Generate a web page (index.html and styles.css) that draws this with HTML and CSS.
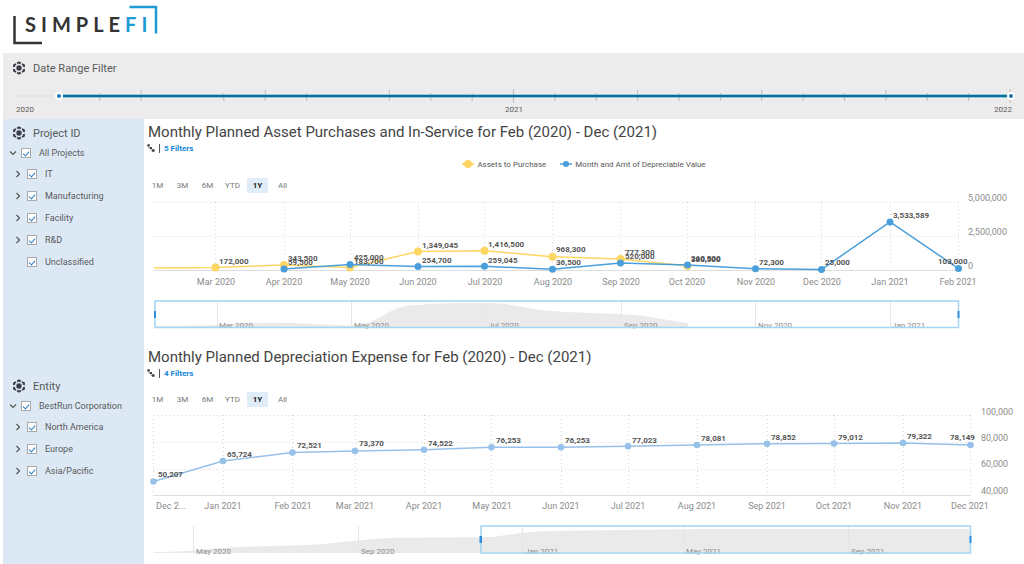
FILE: index.html
```html
<!DOCTYPE html>
<html lang="en">
<head>
<meta charset="utf-8">
<meta name="viewport" content="width=device-width, initial-scale=1">
<title>SimpleFi – Asset Planning</title>
<link rel="stylesheet" href="styles.css">
</head>
<body>
<svg class="defs" aria-hidden="true">
  <symbol id="hex" viewBox="0 0 14 14">
    <circle cx="7" cy="7" r="2.7"/>
    <path d="M4.6 1.800 7 .3 9.400 1.800 8.300 3.200 7 2.500 5.700 3.200ZM10.200 2.200 12.900 3.600V6.200L10.800 5.800V4.600L9.600 3.800ZM10.800 8.200 12.900 7.800V10.400L10.200 11.800 9.600 10.200 10.800 9.400ZM4.600 12.200 7 13.700 9.400 12.200 8.300 10.800 7 11.500 5.700 10.800ZM3.800 2.200 1.100 3.600V6.200L3.200 5.800V4.600L4.400 3.800ZM3.200 8.200 1.100 7.800V10.400L3.800 11.800 4.400 10.200 3.200 9.400Z"/>
  </symbol>
  <symbol id="right" viewBox="0 0 8 8"><path d="M2.5 1 5.5 4 2.5 7" fill="none" stroke="currentColor" stroke-width="1.2"/></symbol>
  <symbol id="down" viewBox="0 0 8 8"><path d="M1 2.5 4 5.5 7 2.5" fill="none" stroke="currentColor" stroke-width="1.2"/></symbol>
  <symbol id="steps" viewBox="0 0 8 8"><path d="M.3 .3H2.800V2.500H.3ZM2.800 2.900H5V5H2.800ZM5 5.300H7.600V7.700H5Z"/><path d="M1.500 2V4H3M4 5V6.600H5" fill="none" stroke="currentColor" stroke-width=".4"/></symbol>
</svg>

<header class="brand">
  <svg class="logo" viewBox="0 0 146 42" role="img" aria-label="SimpleFi">
    <path class="bracket-dark" d="M1.500 11V38H29"/>
    <path class="bracket-blue" d="M116.500 2H143V28.500"/>
    <text class="wordmark" x="12" y="27">SIMPLE<tspan class="wordmark-fi">FI</tspan></text>
  </svg>
</header>

<section class="date-filter">
  <h2 class="filter-title"><svg class="icon-hex"><use href="#hex"/></svg>Date Range Filter</h2>
  <div class="slider">
    <svg class="track">
      <line class="rail" x1="0" x2="4.2%" y1="9" y2="9"/>
      <g class="ticks">
        <line x1="8.333%" x2="8.333%" y1="6" y2="14"/><line x1="12.5%" x2="12.5%" y1="3" y2="14"/>
        <line x1="20.833%" x2="20.833%" y1="6" y2="14"/><line x1="25%" x2="25%" y1="3" y2="14"/>
        <line x1="29.167%" x2="29.167%" y1="6" y2="14"/><line x1="37.5%" x2="37.5%" y1="3" y2="14"/>
        <line x1="41.667%" x2="41.667%" y1="6" y2="14"/><line x1="45.833%" x2="45.833%" y1="6" y2="14"/>
        <line x1="50%" x2="50%" y1="2" y2="16"/><line x1="54.167%" x2="54.167%" y1="6" y2="14"/>
        <line x1="58.333%" x2="58.333%" y1="6" y2="14"/><line x1="62.5%" x2="62.5%" y1="3" y2="14"/>
        <line x1="66.667%" x2="66.667%" y1="6" y2="14"/><line x1="70.833%" x2="70.833%" y1="6" y2="14"/>
        <line x1="75%" x2="75%" y1="3" y2="14"/><line x1="79.167%" x2="79.167%" y1="6" y2="14"/>
        <line x1="83.333%" x2="83.333%" y1="6" y2="14"/><line x1="87.5%" x2="87.5%" y1="3" y2="14"/>
        <line x1="91.667%" x2="91.667%" y1="6" y2="14"/><line x1="95.833%" x2="95.833%" y1="6" y2="14"/>
        <line x1="100%" x2="100%" y1="2" y2="16"/>
      </g>
      <line class="range" x1="4.2%" x2="100%" y1="9" y2="9"/>
      <line class="range-core" x1="4.2%" x2="100%" y1="9" y2="9"/>
    </svg>
    <input class="handle" type="range" min="0" max="24" value="1" aria-label="Start month">
    <input class="handle" type="range" min="0" max="24" value="24" aria-label="End month">
  </div>
  <div class="years"><span>2020</span><span>2021</span><span>2022</span></div>
</section>

<div class="body">
  <aside class="sidebar">
    <section class="filter">
      <h2 class="filter-title"><svg class="icon-hex"><use href="#hex"/></svg>Project ID</h2>
      <ul class="tree">
        <li class="node root"><button class="toggle" aria-label="Collapse All Projects"><svg><use href="#down"/></svg></button><label><input type="checkbox" checked>All Projects</label></li>
        <li class="node"><button class="toggle" aria-label="Expand IT"><svg><use href="#right"/></svg></button><label><input type="checkbox" checked>IT</label></li>
        <li class="node"><button class="toggle" aria-label="Expand Manufacturing"><svg><use href="#right"/></svg></button><label><input type="checkbox" checked>Manufacturing</label></li>
        <li class="node"><button class="toggle" aria-label="Expand Facility"><svg><use href="#right"/></svg></button><label><input type="checkbox" checked>Facility</label></li>
        <li class="node"><button class="toggle" aria-label="Expand R&amp;D"><svg><use href="#right"/></svg></button><label><input type="checkbox" checked>R&amp;D</label></li>
        <li class="node leaf"><label><input type="checkbox" checked>Unclassified</label></li>
      </ul>
    </section>
    <section class="filter">
      <h2 class="filter-title"><svg class="icon-hex"><use href="#hex"/></svg>Entity</h2>
      <ul class="tree">
        <li class="node root"><button class="toggle" aria-label="Collapse BestRun Corporation"><svg><use href="#down"/></svg></button><label><input type="checkbox" checked>BestRun Corporation</label></li>
        <li class="node"><button class="toggle" aria-label="Expand North America"><svg><use href="#right"/></svg></button><label><input type="checkbox" checked>North America</label></li>
        <li class="node"><button class="toggle" aria-label="Expand Europe"><svg><use href="#right"/></svg></button><label><input type="checkbox" checked>Europe</label></li>
        <li class="node"><button class="toggle" aria-label="Expand Asia/Pacific"><svg><use href="#right"/></svg></button><label><input type="checkbox" checked>Asia/Pacific</label></li>
      </ul>
    </section>
  </aside>

  <main class="charts">
    <section class="card">
      <h1 class="card-title">Monthly Planned Asset Purchases and In-Service for Feb (2020) - Dec (2021)</h1>
      <div class="card-filters"><svg class="icon-steps"><use href="#steps"/></svg><a href="#filters">5 Filters</a></div>
      <div class="legend">
        <span class="key"><svg viewBox="0 0 12 10"><path d="M0 5H12" stroke="#fdd663" stroke-width="2"/><circle cx="6" cy="5" r="4" fill="#fdd663"/></svg>Assets to Purchase</span>
        <span class="key"><svg viewBox="0 0 12 10"><path d="M0 5H12" stroke="#4a9fdb" stroke-width="1.500"/><circle cx="6" cy="5" r="3" fill="#4a9fdb"/></svg>Month and Amt of Depreciable Value</span>
      </div>
      <div class="periods"><button>1M</button><button>3M</button><button>6M</button><button>YTD</button><button class="on">1Y</button><button>All</button></div>
      <svg class="chart" viewBox="144 194 880 142">
        <path class="grid" d="M154 202.500H959M154 236.500H959M215.500 202V270M284.500 202V270M350.500 202V270M418.500 202V270M484.500 202V270M552.500 202V270M620.500 202V270M687.500 202V270M755.500 202V270M821.500 202V270M890.500 202V270M958.500 202V270"/>
        <path class="axis" d="M154 270.500H959"/>
        <g class="yellow">
          <polyline points="154,268 215.500,267.500 284,265 350,267.500 418,251.500 484.500,250.700 552.500,256.700 620.500,259 687.500,266"/>
          <circle cx="215.500" cy="267.500" r="4"/><circle cx="284" cy="265" r="4"/><circle cx="350" cy="267.500" r="4"/><circle cx="418" cy="251.500" r="4"/><circle cx="484.500" cy="250.700" r="4"/><circle cx="552.500" cy="256.700" r="4"/><circle cx="620.500" cy="259" r="4"/><circle cx="687.500" cy="266" r="4"/>
        </g>
        <g class="blue">
          <polyline points="284,269 350,264.500 418,266.500 484.500,266.300 552.500,269.300 620.500,263 687.500,265 755.500,268.700 821.500,269.500 890,222 958.500,268.500"/>
          <circle cx="284" cy="269" r="3.500"/><circle cx="350" cy="264.500" r="3.500"/><circle cx="418" cy="266.500" r="3.500"/><circle cx="484.500" cy="266.300" r="3.500"/><circle cx="552.500" cy="269.300" r="3.500"/><circle cx="620.500" cy="263" r="3.500"/><circle cx="687.500" cy="265" r="3.500"/><circle cx="755.500" cy="268.700" r="3.500"/><circle cx="821.500" cy="269.500" r="3.500"/><circle cx="890" cy="222" r="3.500"/><circle cx="958.500" cy="268.500" r="3.500"/>
        </g>
        <g class="value">
          <text x="219" y="264">172,000</text><text x="288" y="261">343,500</text><text x="288" y="265">59,500</text>
          <text x="354" y="260">425,000</text><text x="354" y="264">183,700</text>
          <text x="422" y="248">1,349,045</text><text x="422" y="263">254,700</text>
          <text x="488" y="247">1,416,500</text><text x="488" y="263">259,045</text>
          <text x="556" y="252">968,300</text><text x="556" y="265">36,500</text>
          <text x="625" y="255">777,300</text><text x="625" y="259">520,000</text>
          <text x="691" y="261">260,500</text><text x="691" y="262">380,500</text>
          <text x="759" y="265">72,300</text><text x="825" y="265">25,000</text><text x="893" y="218">3,533,589</text><text x="938" y="264">103,000</text>
        </g>
        <g class="label mid">
          <text x="216" y="285">Mar 2020</text><text x="284" y="285">Apr 2020</text><text x="350" y="285">May 2020</text><text x="418" y="285">Jun 2020</text><text x="485" y="285">Jul 2020</text><text x="553" y="285">Aug 2020</text><text x="621" y="285">Sep 2020</text><text x="687" y="285">Oct 2020</text><text x="756" y="285">Nov 2020</text><text x="822" y="285">Dec 2020</text><text x="890" y="285">Jan 2021</text><text x="958" y="285">Feb 2021</text>
        </g>
        <g class="label"><text x="968" y="201">5,000,000</text><text x="968" y="235">2,500,000</text><text x="968" y="269">0</text></g>
        <path class="area" d="M155 327V326C190 326 230 325 262 323C290 322 320 325 350 325.500C385 324 385 305 418 305C440 303 470 303 485 303C515 303 525 309 552 311C580 313 600 313 621 314C650 316 665 320 688 323V327Z"/>
        <path class="overview-grid" d="M217.500 301V327M351.500 301V327M485.500 301V327M621.500 301V327M755.500 301V327M890.500 301V327"/>
        <g class="small"><text x="219" y="328">Mar 2020</text><text x="354" y="328">May 2020</text><text x="488" y="328">Jul 2020</text><text x="624" y="328">Sep 2020</text><text x="758" y="328">Nov 2020</text><text x="892" y="328">Jan 2021</text></g>
        <rect class="window" x="155" y="301" width="803.500" height="26.500"/>
        <path class="grip" d="M154 311h2v7h-2zM957.500 311h2v7h-2z"/>
      </svg>
    </section>

    <section class="card">
      <h1 class="card-title">Monthly Planned Depreciation Expense for Feb (2020) - Dec (2021)</h1>
      <div class="card-filters"><svg class="icon-steps"><use href="#steps"/></svg><a href="#filters">4 Filters</a></div>
      <div class="periods"><button>1M</button><button>3M</button><button>6M</button><button>YTD</button><button class="on">1Y</button><button>All</button></div>
      <svg class="chart" viewBox="144 408 880 149">
        <path class="grid" d="M153 415.500H971M153 442.500H971M153 469.500H971M153.500 415V495M223.500 415V495M292.500 415V495M355.500 415V495M424.500 415V495M491.500 415V495M561.500 415V495M628.500 415V495M697.500 415V495M767.500 415V495M834.500 415V495M903.500 415V495M970.500 415V495"/>
        <path class="axis" d="M153 495.500H971"/>
        <g class="pale">
          <polyline points="153.500,481.500 223,461 292.500,452.500 355,451 424,449.700 491.500,447.300 561,447.300 628,446.300 697,445 767,443.700 834,443.500 903,443 970.500,445"/>
          <circle cx="153.500" cy="481.500" r="3.300"/><circle cx="223" cy="461" r="3.300"/><circle cx="292.500" cy="452.500" r="3.300"/><circle cx="355" cy="451" r="3.300"/><circle cx="424" cy="449.700" r="3.300"/><circle cx="491.500" cy="447.300" r="3.300"/><circle cx="561" cy="447.300" r="3.300"/><circle cx="628" cy="446.300" r="3.300"/><circle cx="697" cy="445" r="3.300"/><circle cx="767" cy="443.700" r="3.300"/><circle cx="834" cy="443.500" r="3.300"/><circle cx="903" cy="443" r="3.300"/><circle cx="970.500" cy="445" r="3.300"/>
        </g>
        <g class="value">
          <text x="158" y="477">50,207</text><text x="227" y="457">65,724</text><text x="297" y="448">72,521</text><text x="359" y="446">73,370</text><text x="428" y="446">74,522</text><text x="496" y="443">76,253</text><text x="565" y="443">76,253</text><text x="632" y="443">77,023</text><text x="701" y="441">78,081</text><text x="771" y="440">78,852</text><text x="838" y="440">79,012</text><text x="907" y="439">79,322</text><text x="950" y="440">78,149</text>
        </g>
        <g class="label mid">
          <text x="171" y="509">Dec 2...</text><text x="223" y="509">Jan 2021</text><text x="293" y="509">Feb 2021</text><text x="355" y="509">Mar 2021</text><text x="424" y="509">Apr 2021</text><text x="492" y="509">May 2021</text><text x="561" y="509">Jun 2021</text><text x="628" y="509">Jul 2021</text><text x="697" y="509">Aug 2021</text><text x="767" y="509">Sep 2021</text><text x="834" y="509">Oct 2021</text><text x="903" y="509">Nov 2021</text><text x="970" y="509">Dec 2021</text>
        </g>
        <g class="label"><text x="981" y="415">100,000</text><text x="981" y="441">80,000</text><text x="981" y="467">60,000</text><text x="981" y="494">40,000</text></g>
        <path class="area" d="M154 553V552C180 552 200 550 220 548C250 546 280 546 310 545C340 543 360 539 390 538C420 537.500 460 537.500 490 537C510 535 520 532 550 531C600 530 640 530 700 529H970V553Z"/>
        <path class="overview-grid" d="M193.500 526V553M358.500 526V553M522.500 526V553M684.500 526V553M848.500 526V553"/>
        <g class="small"><text x="196" y="554">May 2020</text><text x="361" y="554">Sep 2020</text><text x="525" y="554">Jan 2021</text><text x="686" y="554">May 2021</text><text x="851" y="554">Sep 2021</text></g>
        <rect class="window" x="481" y="526" width="489.500" height="27"/>
        <path class="grip" d="M479.500 536h2.500v7h-2.500zM969.500 536h2v7h-2z"/>
      </svg>
    </section>
  </main>
</div>
</body>
</html>
```
FILE: styles.css
```css
* { box-sizing: border-box; }

body {
  margin: 0;
  min-height: 100vh;
  display: flex;
  flex-direction: column;
  background: #fff;
  color: #595959;
  font-family: Roboto, "Liberation Sans", sans-serif;
}

h1, h2, ul { margin: 0; padding: 0; font-weight: 400; }
button { border: 0; padding: 0; background: none; font: inherit; color: inherit; cursor: pointer; }
.defs { display: none; }

.brand { height: 53px; padding: 5px 13px; }
.logo { display: block; width: 146px; height: 42px; }
.bracket-dark { fill: none; stroke: #333; stroke-width: 2.5; }
.bracket-blue { fill: none; stroke: #1e9bd3; stroke-width: 2.5; }
.wordmark { font: 700 20px Lato, sans-serif; letter-spacing: 5px; fill: #333; }
.wordmark-fi { fill: #1e9bd3; }

.date-filter {
  margin-left: 3px;
  height: 66px;
  padding: 6px 14px 0 9px;
  background: #ececec;
}
.filter-title {
  display: flex;
  align-items: center;
  gap: 7px;
  font-size: 11px;
  line-height: 20px;
}
.icon-hex { width: 14px; height: 14px; fill: #3d3d4a; margin-top: -2px; }

.slider { display: grid; height: 18px; margin: 8px 0 0 5px; }
.slider > * { grid-area: 1 / 1; }
.track { width: 100%; height: 18px; overflow: visible; }
.rail { stroke: #ddd; stroke-width: 1; }
.ticks { stroke: #bbb; stroke-width: 1; }
.range { stroke: #54a5bf; stroke-width: 3; }
.range-core { stroke: #0070a0; stroke-width: 2; }
.handle {
  appearance: none;
  height: 18px;
  margin: 0 -5px 0 -3px;
  background: none;
  pointer-events: none;
}
.handle::-webkit-slider-thumb {
  appearance: none;
  width: 8px;
  height: 8px;
  border: 2px solid #fff;
  border-radius: 50%;
  background: #2476b2;
  pointer-events: auto;
}
.years { display: flex; justify-content: space-between; margin: 1px -2px 0 4px; font-size: 8px; line-height: 8px; }

.body { flex: 1; display: flex; margin-left: 3px; }
.sidebar { width: 141px; flex: none; padding: 5px 6px; background: #dce9f5; }
.sidebar .filter-title { padding-left: 3px; }
.filter + .filter { margin-top: 104px; }
.tree { margin-top: -1px; list-style: none; font-size: 9px; }
.node { display: flex; align-items: center; gap: 4px; height: 22px; padding-left: 5px; }
.node.root { gap: 3px; height: 20px; padding-left: 0; }
.node.leaf { padding-left: 18px; }
.toggle { width: 9px; height: 9px; flex: none; color: #555; }
.toggle svg { display: block; width: 8px; height: 8px; }
.node label { display: flex; align-items: center; gap: 8px; white-space: nowrap; }
.node input {
  appearance: none;
  display: grid;
  place-items: center;
  width: 10px;
  height: 10px;
  margin: 0;
  border: 1px solid #aaa;
  background: #fff;
}
.node input:checked::after {
  content: "";
  width: 3px;
  height: 5px;
  border: solid #2a7fc4;
  border-width: 0 1px 1px 0;
  transform: rotate(40deg);
}

.charts { flex: 1; min-width: 0; }
.card { display: flex; flex-direction: column; padding-top: 3px; }
.card + .card { padding-top: 11px; }
.card-title { padding-left: 4px; font-size: 15px; line-height: 20px; color: #444; }
.card-filters { display: flex; align-items: center; gap: 4px; padding-left: 3px; height: 12px; }
.card-filters a {
  padding-left: 4px;
  border-left: 1px solid #555;
  color: #1589d6;
  font-size: 8px;
  font-weight: 700;
  line-height: 9px;
  text-decoration: none;
}
.icon-steps { width: 8px; height: 8px; color: #444; fill: #444; }
.legend { display: flex; justify-content: center; gap: 14px; height: 12px; margin: 4px 0 -5px; font-size: 8px; }
.key { display: flex; align-items: center; gap: 3px; }
.key svg { width: 12px; height: 10px; }
.periods { display: flex; gap: 4px; margin-top: 13px; padding-left: 3px; }
.periods button { width: 21px; height: 15px; font-size: 8px; color: #777; }
.periods .on { background: #e0ecf8; color: #222; font-weight: 700; }

.chart { display: block; width: 100%; height: auto; margin-top: 1px; }
.grid { fill: none; stroke: #d6d6d6; stroke-width: 1; stroke-dasharray: 1 3; }
.axis { stroke: #ddd; stroke-width: 1; }
.yellow, .blue, .pale { stroke-width: 1.5; }
.yellow { fill: #fdd663; stroke: #fdd663; }
.blue { fill: #4a9fdb; stroke: #4a9fdb; }
.pale { fill: #97c1e8; stroke: #97c1e8; }
.chart polyline { fill: none; }
.chart circle { stroke: none; }
.value { font-size: 8px; font-weight: 700; fill: #555; }
.label { font-size: 9px; fill: #8c8c8c; }
.mid { text-anchor: middle; }
.small { font-size: 8px; fill: #8c8c8c; }
.area { fill: #eaeaea; }
.overview-grid { stroke: #e6e6e6; stroke-width: 1; }
.window { fill: none; stroke: #a3d5f5; stroke-width: 1.5; }
.grip { fill: #2f8fdd; }
```
